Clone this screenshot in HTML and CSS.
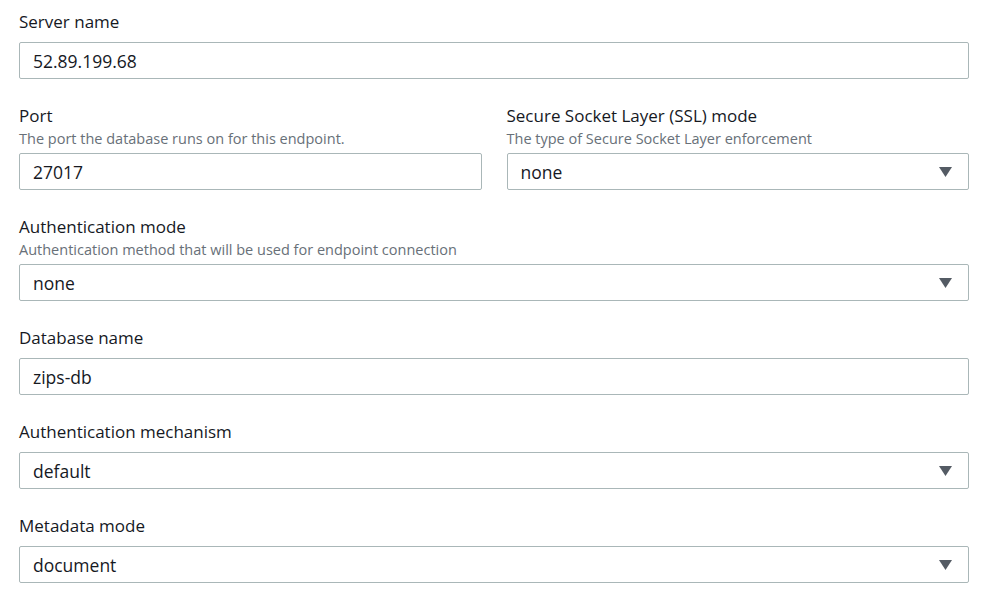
FILE: index.html
```html
<!DOCTYPE html>
<html lang="en">
<head>
  <meta charset="UTF-8">
  <meta name="viewport" content="width=device-width, initial-scale=1.0">
  <title>Endpoint settings</title>
  <link rel="stylesheet" href="styles.css">
</head>
<body>
  <form class="endpoint-form">
    <div class="field">
      <label for="server-name">Server name</label>
      <input type="text" id="server-name" value="52.89.199.68">
    </div>

    <!-- port and SSL sit side by side -->
    <div class="row">
      <div class="field">
        <label for="port">Port</label>
        <div class="hint">The port the database runs on for this endpoint.</div>
        <input type="text" id="port" value="27017">
      </div>
      <div class="field">
        <label for="ssl-mode">Secure Socket Layer (SSL) mode</label>
        <div class="hint">The type of Secure Socket Layer enforcement</div>
        <div class="select">
          <select id="ssl-mode">
            <option>none</option>
            <option>require</option>
            <option>verify-full</option>
          </select>
          <svg class="caret" width="13" height="10" viewBox="0 0 13 10"><path d="M0 0h13L6.5 10z"/></svg>
        </div>
      </div>
    </div>

    <div class="field">
      <label for="auth-mode">Authentication mode</label>
      <div class="hint">Authentication method that will be used for endpoint connection</div>
      <div class="select">
        <select id="auth-mode">
          <option>none</option>
          <option>password</option>
        </select>
        <svg class="caret" width="13" height="10" viewBox="0 0 13 10"><path d="M0 0h13L6.5 10z"/></svg>
      </div>
    </div>

    <div class="field">
      <label for="db-name">Database name</label>
      <input type="text" id="db-name" value="zips-db">
    </div>

    <div class="field">
      <label for="auth-mech">Authentication mechanism</label>
      <div class="select">
        <select id="auth-mech">
          <option>default</option>
          <option>mongodb_cr</option>
          <option>scram_sha_1</option>
        </select>
        <svg class="caret" width="13" height="10" viewBox="0 0 13 10"><path d="M0 0h13L6.5 10z"/></svg>
      </div>
    </div>

    <div class="field">
      <label for="meta-mode">Metadata mode</label>
      <div class="select">
        <select id="meta-mode">
          <option>document</option>
          <option>table</option>
        </select>
        <svg class="caret" width="13" height="10" viewBox="0 0 13 10"><path d="M0 0h13L6.5 10z"/></svg>
      </div>
    </div>
  </form>
</body>
</html>
```

FILE: styles.css
```css
:root {
  --text: #16191f;
  --muted: #687078;
  --border: #aab7b8;
  --caret: #545b64;
}
body {
  margin: 0;
  background: #fff;
  color: var(--text);
  font-family: 'Open Sans', 'Noto Sans', sans-serif;
}
.endpoint-form {
  display: flex;
  flex-direction: column;
  gap: 25px;
  padding: 10px 13px 0 19px;
}
.row {
  display: grid;
  grid-template-columns: 1fr 1fr;
  gap: 25px;
}
.field {
  display: flex;
  flex-direction: column;
}
.field label {
  font-size: 17px;
  line-height: 22px;
  padding-top: 1px;
}
.hint {
  font-size: 14.5px;
  line-height: 20px;
  padding-top: 2px;
  color: var(--muted);
}
.field input,
.field select {
  box-sizing: border-box;
  width: 100%;
  height: 37px;
  margin: 0;
  padding: 0 13px;
  border: 1px solid var(--border);
  border-radius: 2px;
  background: #fff;
  color: var(--text);
  font-family: inherit;
  font-size: 17.5px;
  outline: none;
}
.field > input,
.field > .select {
  margin-top: 9px;
}
.field > .hint + input,
.field > .hint + .select {
  margin-top: 4px;
}
.select {
  position: relative;
}
.select select {
  appearance: none;
  -webkit-appearance: none;
}
/* arrow drawn over the native select */
.caret {
  position: absolute;
  right: 17px;
  top: 14px;
  fill: var(--caret);
  pointer-events: none;
}
```
